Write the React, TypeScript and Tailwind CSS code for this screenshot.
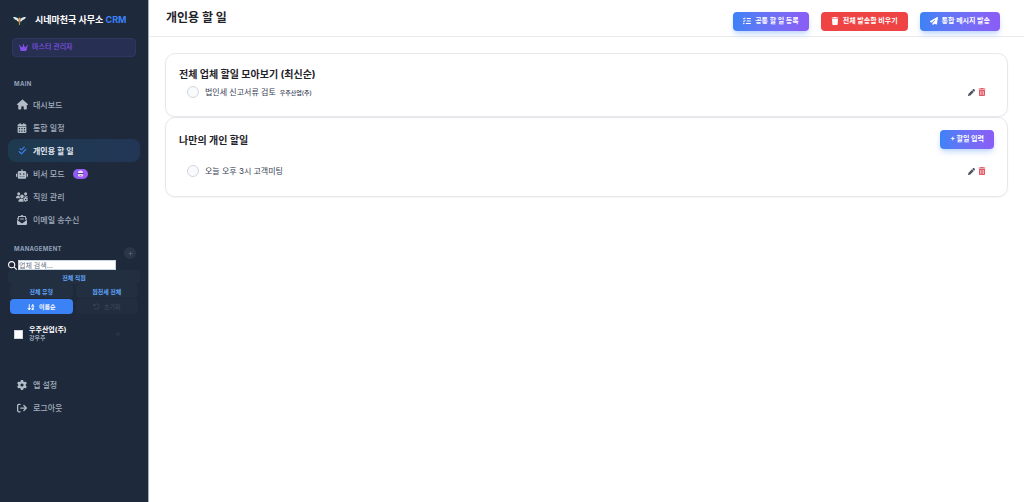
import type { ReactNode } from 'react';
import {
  FaArrowDownAZ,
  FaArrowRightFromBracket,
  FaCalendarDays,
  FaCheckDouble,
  FaCrown,
  FaEnvelopeOpenText,
  FaGear,
  FaHouse,
  FaListCheck,
  FaMagnifyingGlass,
  FaPaperPlane,
  FaPen,
  FaPlus,
  FaRobot,
  FaRotateLeft,
  FaTrash,
  FaTrashCan,
  FaUsersGear,
} from 'react-icons/fa6';

interface NavItem {
  label: string;
  icon: ReactNode;
  active?: boolean;
  badge?: boolean;
}

const mainNav: NavItem[] = [
  { label: '대시보드', icon: <FaHouse size={11} /> },
  { label: '통합 일정', icon: <FaCalendarDays size={10} /> },
  { label: '개인용 할 일', icon: <FaCheckDouble size={9} />, active: true },
  { label: '비서 모드', icon: <FaRobot size={12} />, badge: true },
  { label: '직원 관리', icon: <FaUsersGear size={12} /> },
  { label: '이메일 송수신', icon: <FaEnvelopeOpenText size={10} /> },
];

const footerNav: NavItem[] = [
  { label: '앱 설정', icon: <FaGear size={10} /> },
  { label: '로그아웃', icon: <FaArrowRightFromBracket size={10} /> },
];

function Logo() {
  return (
    <svg width="15" height="15" viewBox="0 0 30 30" aria-hidden="true">
      <rect width="30" height="30" rx="7" fill="#1b2c3a" />
      <path d="M2 8c5 0 9 1 12 5v4c-3 0-4-1-5-3-3 0-5-2-7-6z" fill="#e3e8ea" />
      <path d="M28 8c-5 0-9 1-12 5v4c3 0 4-1 5-3 3 0 5-2 7-6z" fill="#e3e8ea" />
      <path d="M13 12h4l-1 12h-2z" fill="#c08a48" />
      <circle cx="15" cy="11" r="2" fill="#d3a468" />
    </svg>
  );
}

// tiny robot face for the assistant badge
function BadgeFace() {
  return (
    <svg width="7" height="7" viewBox="0 0 14 14" aria-hidden="true">
      <path d="M2 5a5 4 0 0 1 10 0v1H2z" fill="#e9e4f5" />
      <rect x="1" y="6" width="12" height="2" fill="#54407f" />
      <rect x="2" y="8" width="10" height="5" rx="2" fill="#e9e4f5" />
      <rect x="5" y="10" width="4" height="1" fill="#54407f" />
    </svg>
  );
}

function NavList({ items }: { items: NavItem[] }) {
  return (
    <ul>
      {items.map((item) => (
        <li key={item.label}>
          <a
            href="#"
            className={
              item.active
                ? 'flex h-[23px] items-center gap-1 rounded-lg bg-gradient-to-r from-[#1e3a4f] to-[#223656] pl-2 text-[8px] font-bold text-slate-200'
                : 'flex h-[23px] items-center gap-1 rounded-lg pl-2 text-[8px] font-medium text-[#a3aebd]'
            }>
            <span
              className={
                item.active
                  ? 'flex w-3 justify-center text-[#3b82f6]'
                  : 'flex w-3 justify-center text-[#b4bcc7]'
              }>
              {item.icon}
            </span>
            <span className="pl-px">{item.label}</span>
            {item.badge && (
              <span className="ml-1 flex h-[10px] w-[15px] items-center justify-center rounded-full bg-gradient-to-r from-[#8b5cf6] to-[#a855f7]">
                <BadgeFace />
              </span>
            )}
          </a>
        </li>
      ))}
    </ul>
  );
}

function Sidebar() {
  return (
    <aside className="flex w-[149px] shrink-0 flex-col border-r border-[#a5abb4] bg-[#1e293b] px-2">
      <div className="flex h-10 items-center gap-2 pl-1 text-[9px] font-bold whitespace-nowrap text-white">
        <Logo />
        <h1>
          시네마천국 사무소 <span className="text-[#3b82f6]">CRM</span>
        </h1>
      </div>
      <div className="mx-1 -mt-0.5 flex h-[19px] items-center gap-1 rounded border border-[#2d3760] bg-[#273053] pl-1.5 text-[7px] font-medium text-[#8250e8]">
        <FaCrown size={9} />
        마스터 관리자
      </div>

      <nav className="pt-[21px]">
        <h2 className="pb-[3px] pl-1.5 text-[6px] leading-3 font-bold tracking-wider text-slate-400">
          MAIN
        </h2>
        <NavList items={mainNav} />
      </nav>

      <section className="pt-2">
        <div className="flex items-center justify-between pr-1 pl-1.5">
          <h2 className="text-[6px] leading-3 font-bold tracking-wider text-slate-400">MANAGEMENT</h2>
          <button
            aria-label="업체 추가"
            className="mt-2 flex size-3 items-center justify-center rounded-full bg-[#2b3647] text-slate-500">
            <FaPlus size={5} />
          </button>
        </div>
        <label className="flex items-center gap-px pt-px text-white">
          <FaMagnifyingGlass size={9} className="shrink-0" />
          <input
            type="text"
            aria-label="업체 검색"
            placeholder="업체 검색..."
            className="h-[10px] w-[98px] border border-slate-300 bg-white text-[7px] leading-none text-gray-800 placeholder:text-gray-500"
          />
        </label>
        <div className="text-[6px] font-bold text-[#60a5fa]">
          <button className="h-[14px] w-full rounded-sm bg-[#222f40]">전체 직원</button>
          <div className="grid grid-cols-2 gap-x-[3px] gap-y-px px-0.5">
            <button className="h-[14px] rounded-sm bg-[#222f40]">전체 유형</button>
            <button className="h-[14px] rounded-sm bg-[#222f40]">원천세 전체</button>
            <button className="flex h-[15px] items-center justify-center gap-1 rounded-sm bg-[#3b82f6] text-white">
              <FaArrowDownAZ size={8} />
              이름순
            </button>
            <button className="flex h-[15px] items-center justify-center gap-1 rounded-sm bg-[#222e3f] text-[#364355]">
              <FaRotateLeft size={7} />
              초기화
            </button>
          </div>
        </div>
        <div className="flex items-center pt-3 pr-5 pl-1.5">
          <input
            id="client"
            type="checkbox"
            className="size-[9px] appearance-none border border-gray-300 bg-white checked:bg-[#3b82f6]"
          />
          <label htmlFor="client" className="flex flex-1 flex-col pl-1.5">
            <span className="text-[7px] leading-2 font-bold text-white">우주산업(주)</span>
            <span className="text-[6px] leading-2 text-slate-300">강우주</span>
          </label>
          <span className="size-1 rounded-full bg-[#263446]" />
        </div>
      </section>

      <nav className="pt-[31px]">
        <NavList items={footerNav} />
      </nav>
    </aside>
  );
}

function ActionButton({ icon, danger, children }: { icon?: ReactNode; danger?: boolean; children: ReactNode }) {
  return (
    <button
      className={
        danger
          ? 'flex h-[19px] items-center gap-1 rounded bg-[#ef4444] px-2.5 text-[7px] font-bold whitespace-nowrap text-white'
          : 'flex h-[19px] items-center gap-1 rounded bg-gradient-to-r from-[#3b82f6] to-[#8b5cf6] px-2.5 text-[7px] font-bold whitespace-nowrap text-white shadow-md shadow-[#3b82f6]/25'
      }>
      {icon}
      {children}
    </button>
  );
}

function TodoRow({ id, text, company }: { id: string; text: string; company?: string }) {
  return (
    <div className="flex items-center px-2 text-[8px] text-gray-700">
      <input
        id={id}
        type="checkbox"
        className="size-3 appearance-none rounded-full border border-gray-300 bg-gray-50 checked:bg-[#3b82f6]"
      />
      <label htmlFor={id} className="pl-1.5 leading-4">
        {text}
      </label>
      {company && <span className="pl-1 text-[6px] font-medium text-gray-700">{company}</span>}
      <div className="ml-auto flex items-center gap-[3px]">
        <button aria-label="수정" className="text-gray-600">
          <FaPen size={7} />
        </button>
        <button aria-label="삭제" className="text-[#e25563]">
          <FaTrashCan size={8} />
        </button>
      </div>
    </div>
  );
}

export default function App() {
  return (
    <div className="flex min-h-screen bg-white font-['Inter','Noto_Sans_CJK_KR',sans-serif]">
      <Sidebar />
      <div className="min-w-0 flex-1">
        <header className="flex h-[37px] items-center justify-between border-b border-[#e8eaee] pr-6 pl-[17px]">
          <h2 className="text-[12px] leading-4 font-bold text-[#1f2329]">개인용 할 일</h2>
          <div className="flex gap-3 pt-1.5">
            <ActionButton icon={<FaListCheck size={8} />}>공통 할 일 등록</ActionButton>
            <ActionButton icon={<FaTrash size={8} />} danger>
              전체 발송함 비우기
            </ActionButton>
            <ActionButton icon={<FaPaperPlane size={8} />}>통합 메시지 발송</ActionButton>
          </div>
        </header>

        <main className="px-4 pt-4">
          <section className="min-h-[64px] rounded-[10px] border border-[#e6e8ec] px-[13px] pt-3 pb-4 shadow-xs">
            <h3 className="text-[10px] leading-4 font-bold text-[#1f2329]">전체 업체 할일 모아보기 (최신순)</h3>
            <div className="pt-0.5">
              <TodoRow id="todo-company" text="법인세 신고서류 검토" company="우주산업(주)" />
            </div>
          </section>
          <section className="min-h-[80px] rounded-[10px] border border-[#e6e8ec] px-[13px] pt-3 pb-4 shadow-xs">
            <div className="flex items-center justify-between">
              <h3 className="text-[10px] leading-4 font-bold text-[#1f2329]">나만의 개인 할일</h3>
              <ActionButton>+ 할일 입력</ActionButton>
            </div>
            <div className="pt-3.5">
              <TodoRow id="todo-private" text="오늘 오후 3시 고객미팅" />
            </div>
          </section>
        </main>
      </div>
    </div>
  );
}
